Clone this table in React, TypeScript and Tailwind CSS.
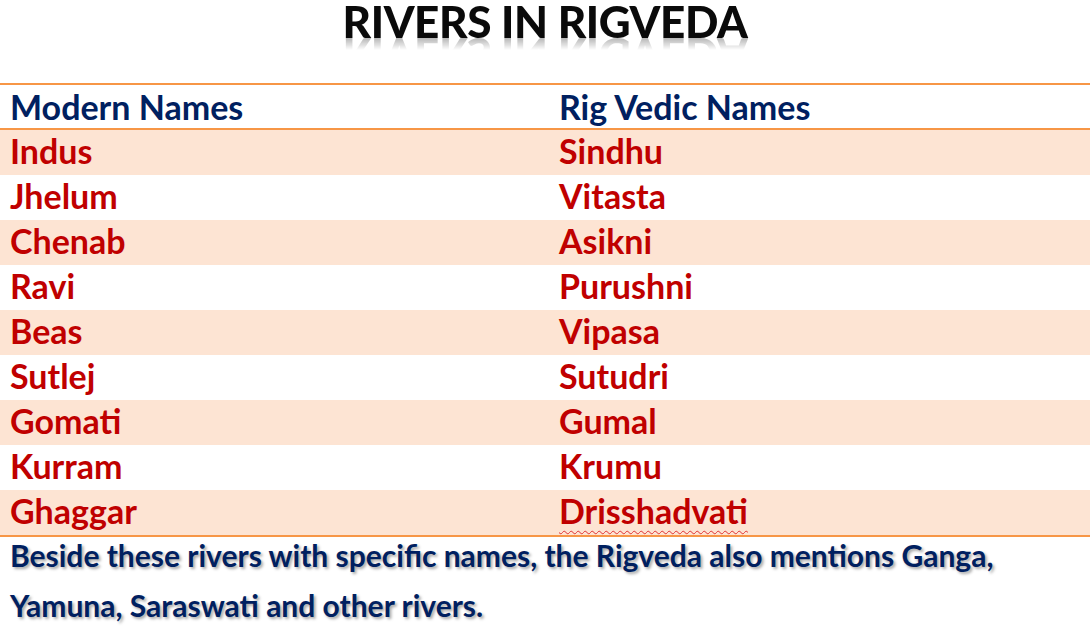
import React from "react";

const rivers = [
  { modern: "Indus", vedic: "Sindhu" },
  { modern: "Jhelum", vedic: "Vitasta" },
  { modern: "Chenab", vedic: "Asikni" },
  { modern: "Ravi", vedic: "Purushni" },
  { modern: "Beas", vedic: "Vipasa" },
  { modern: "Sutlej", vedic: "Sutudri" },
  { modern: "Gomati", vedic: "Gumal" },
  { modern: "Kurram", vedic: "Krumu" },
  { modern: "Ghaggar", vedic: "Drisshadvati", misspelled: true },
];

export default function App() {
  return (
    <div className="w-[1090px] h-[631px] bg-white overflow-hidden font-['Lato','Liberation_Sans',sans-serif]">
      {/* Title */}
      <div className="h-[83px] flex justify-center items-start">
        <h1 className="h-[42px] text-[44px] leading-[42px] font-black text-[#0a0a0a] tracking-[-0.4px] [-webkit-box-reflect:below_-8px_linear-gradient(transparent_62%,rgba(0,0,0,0.4))]">
          RIVERS IN RIGVEDA
        </h1>
      </div>

      {/* Table */}
      <div className="border-t-2 border-b-2 border-[#f79646]">
        <div className="h-[45px] flex items-end pb-[4px] border-b-2 border-[#f79646] text-[#002060] text-[34px] font-bold leading-none">
          <div className="w-[559px] pl-[10px]">Modern Names</div>
          <div>Rig Vedic Names</div>
        </div>
        {rivers.map((r, i) => (
          <div
            key={r.modern}
            className={`h-[45px] flex items-end pb-[7px] text-[#c00000] text-[34px] font-bold leading-none ${
              i % 2 === 0 ? "bg-[#fde4d3]" : "bg-white"
            }`}
          >
            <div className="w-[559px] pl-[10px]">{r.modern}</div>
            <div
              className={
                r.misspelled
                  ? "underline decoration-wavy decoration-[#e03030] decoration-1 underline-offset-[6px]"
                  : ""
              }
            >
              {r.vedic}
            </div>
          </div>
        ))}
      </div>

      {/* Note */}
      <div className="pl-[10px] flex flex-col gap-[14px] text-[#002060] text-[30px] font-bold leading-[36px] [text-shadow:2px_2px_3px_rgba(0,0,0,0.35)]">
        <p>Beside these rivers with specific names, the Rigveda also mentions Ganga,</p>
        <p>Yamuna, Saraswati and other rivers.</p>
      </div>
    </div>
  );
}
